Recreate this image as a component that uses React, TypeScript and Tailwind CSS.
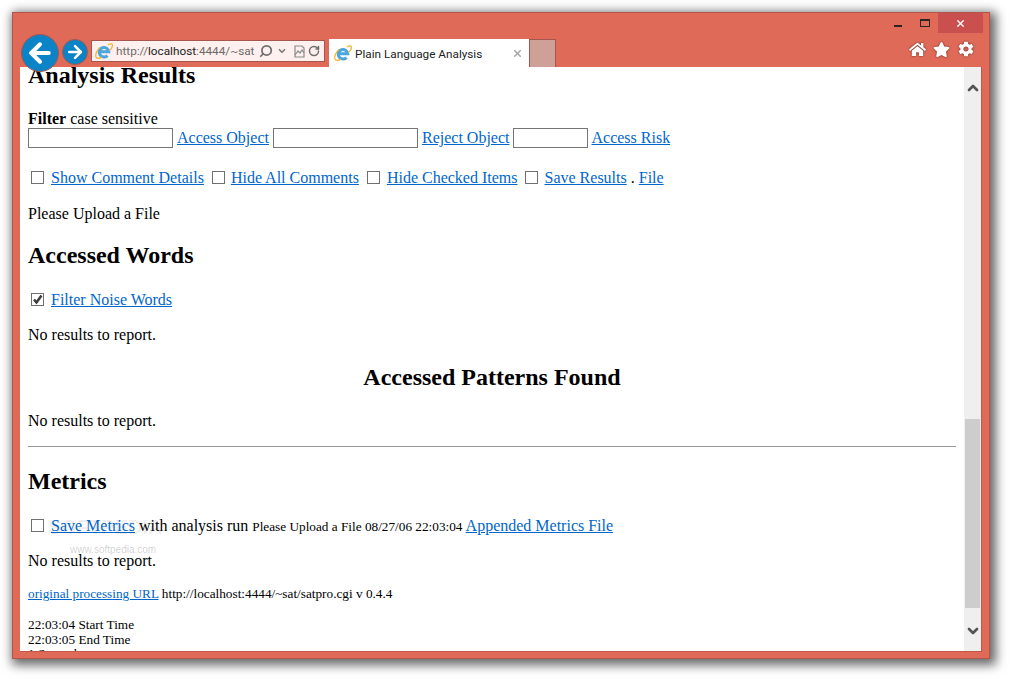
import React from 'react'
import { FaHome, FaStar } from 'react-icons/fa'
import { IoMdSettings } from 'react-icons/io'
import { ArrowLeft, ArrowRight, ChevronDown, ChevronUp, RotateCw, Search, X } from 'lucide-react'

const IeLogo = ({ size = 18 }: { size?: number }) => (
  <svg width={size} height={size} viewBox="0 0 18 18" className="shrink-0">
    <path d="M4.600 9.800h9.200a4.800 4.800 0 1 0-1.300 3.800" fill="none" stroke="#4aa6de" strokeWidth="3" />
    <path d="M12.800 3c2.500-1.600 4.600-1.500 4.700.3.100 1.400-1.300 3.600-3 5.300" fill="none" stroke="#f2b632" strokeWidth="1.300" />
    <path d="M4.800 5.400C1.500 9.300.200 13.400 1.200 15.400c.900 1.600 3.300 1.300 5.600-.3" fill="none" stroke="#f2b632" strokeWidth="1.300" />
  </svg>
)

const Check = ({ checked, cls = '' }: { checked?: boolean; cls?: string }) => (
  <span className={`relative inline-block h-[13px] w-[13px] border border-[#707070] bg-white align-[-1px] ${cls}`}>
    {checked && (
      <svg viewBox="0 0 13 13" className="absolute top-[-1px] left-[-1px] h-[13px] w-[13px]">
        <path d="M3 6.500l2.500 3L10.500 2.500" fill="none" stroke="#3c3c3c" strokeWidth="2.500" />
      </svg>
    )}
  </span>
)

const A = ({ children, cls = '' }: { children: React.ReactNode; cls?: string }) => (
  <a href="#" className={`text-[#0066cc] underline ${cls}`}>{children}</a>
)

const Input = ({ w }: { w: string }) => (
  <span className={`inline-block h-[20px] border border-[#767676] bg-white align-[-5px] ${w}`} />
)

const H2 = ({ children, cls }: { children: React.ReactNode; cls: string }) => (
  <h2 className={`text-[24px] leading-[27px] font-bold ${cls}`}>{children}</h2>
)

const Para = ({ children, cls = '' }: { children: React.ReactNode; cls?: string }) => (
  <p className={`h-[18px] leading-[18px] ${cls}`}>{children}</p>
)

const CheckRow = ({ children, cls }: { children: React.ReactNode; cls: string }) => (
  <div className={`h-[21px] pl-[3px] leading-[21px] whitespace-nowrap ${cls}`}>{children}</div>
)

export default function App() {
  return (
    <div className="h-[679px] w-[1010px] overflow-hidden bg-white pt-3 pl-3 font-['Liberation_Serif',serif] text-black">
      <div className="flex h-[647px] w-[978px] flex-col border border-[#b0564a] bg-[#df6a58] shadow-[3px_3px_10px_3px_rgba(0,0,0,0.6)]">
        {/* window controls */}
        <div className="flex h-[20px] justify-end pr-[6px]">
          <div className="mt-[12px] mr-[18px] h-[2px] w-[8px] bg-[#2a2422]" />
          <div className="mt-[6px] mr-[8px] h-[8px] w-[10px] border border-t-2 border-[#2a2422]" />
          <div className="flex h-[20px] w-[45px] items-center justify-center bg-[#c9504f]">
            <X size={11} strokeWidth={3} className="text-white" />
          </div>
        </div>

        {/* toolbar */}
        <div className="flex h-[34px] items-end pr-[14px] pl-[8px]">
          <div className="z-10 mb-[-5px] flex h-[38px] w-[38px] items-center justify-center rounded-full border border-[#a5574e] bg-[#0a84c6]">
            <ArrowLeft size={30} strokeWidth={3.200} className="text-white" />
          </div>
          <div className="mb-[2px] ml-[3px] flex h-[26px] w-[26px] items-center justify-center rounded-full border border-[#a5574e] bg-[#0a84c6]">
            <ArrowRight size={20} strokeWidth={3} className="text-white" />
          </div>
          <div className="mb-[5px] ml-[3px] flex h-[22px] w-[234px] items-center border border-[#a5574e] bg-[#fdf0ee] pl-[3px] font-['Roboto',sans-serif] text-[11.750px] text-[#6f6a69]">
            <IeLogo />
            <span className="mt-[1px] ml-[3px] w-[143px] whitespace-nowrap">http://<span className="text-[#1c1c1c]">localhost</span>:4444/~sat</span>
            <Search size={14} strokeWidth={3} className="-scale-x-100 text-[#6f6f6f]" />
            <ChevronDown size={10} strokeWidth={4} className="ml-[4px] text-[#7a7a7a]" />
            <svg width="11" height="13" viewBox="0 0 11 13" className="ml-[7px]">
              <path d="M1 1h7l2 2v9H1z" fill="none" stroke="#8a8a8a" strokeWidth="1.200" />
              <path d="M1 10l3-4 2 2 2-3 2 3" fill="none" stroke="#8a8a8a" strokeWidth="1.200" />
            </svg>
            <RotateCw size={12} strokeWidth={3} className="ml-[3px] text-[#6f6f6f]" />
          </div>
          <div className="ml-[4px] flex h-[28px] w-[200px] items-center bg-white pr-[6px] pl-[5px] font-['Roboto',sans-serif] text-[11.750px] text-[#222]">
            <IeLogo />
            <span className="mt-[3px] ml-[3px] flex-1">Plain Language Analysis</span>
            <X size={11} strokeWidth={3.500} className="mt-[1px] text-[#a8a8a8]" />
          </div>
          <div className="h-[28px] w-[27px] border border-b-0 border-[#a5574e] bg-[#cfa097]" />
          <div className="flex-1" />
          <div className="mb-[9px] flex items-center gap-[7px] text-white drop-shadow-[0_0_1px_#6a2c24]">
            <FaHome size={17} />
            <FaStar size={17} />
            <IoMdSettings size={18} />
          </div>
        </div>

        {/* page viewport */}
        <div className="mx-[7px] flex h-[585px] overflow-hidden border-r border-b border-[#c4574a] bg-white">
          <div className="relative h-full w-[945px] overflow-hidden px-[8px] text-[16px]">
            <H2 cls="mt-[-5px] mb-[21px]">Analysis Results</H2>
            <div className="h-[18px] leading-[18px]"><b>Filter</b> case sensitive</div>
            <div className="h-[20px] leading-[20px] whitespace-nowrap">
              <Input w="w-[145px]" />
              <A cls="ml-[4px]">Access Object</A>
              <Input w="ml-[4px] w-[145px]" />
              <A cls="ml-[4px]">Reject Object</A>
              <Input w="ml-[4px] w-[75px]" />
              <A cls="ml-[3px]">Access Risk</A>
            </div>
            <CheckRow cls="mt-[19px]">
              <Check />
              <A cls="ml-[7px]">Show Comment Details</A>
              <Check cls="ml-[8px]" />
              <A cls="ml-[6px]">Hide All Comments</A>
              <Check cls="ml-[8px]" />
              <A cls="ml-[7px]">Hide Checked Items</A>
              <Check cls="ml-[7px]" />
              <A cls="ml-[7px]">Save Results</A>
              <span className="ml-[4px]">.</span>
              <A cls="ml-[4px]">File</A>
            </CheckRow>
            <Para cls="mt-[17px]">Please Upload a File</Para>
            <H2 cls="mt-[19px] mb-[20px]">Accessed Words</H2>
            <CheckRow cls=""><Check checked /><A cls="ml-[7px]">Filter Noise Words</A></CheckRow>
            <Para cls="mt-[16px]">No results to report.</Para>
            <H2 cls="mt-[20px] mb-[21px] text-center">Accessed Patterns Found</H2>
            <Para>No results to report.</Para>
            <hr className="mt-[16px] border-t border-[#9a9a9a]" />
            <H2 cls="mt-[21px] mb-[20px]">Metrics</H2>
            <CheckRow cls="">
              <Check /><A cls="ml-[7px]">Save Metrics</A> with analysis run <span className="text-[13.250px]">Please Upload a File 08/27/06 22:03:04</span> <A>Appended Metrics File</A>
            </CheckRow>
            <Para cls="mt-[16px]">No results to report.</Para>
            <div className="mt-[16px] text-[13.250px] leading-[16px]">
              <A>original processing URL</A> http://localhost:4444/~sat/satpro.cgi v 0.4.4
            </div>
            <div className="mt-[16px] text-[13.250px] leading-[14.500px]">
              <div>22:03:04 Start Time</div>
              <div>22:03:05 End Time</div>
              <div>1 Second</div>
            </div>
            {/* watermark over the page */}
            <div className="absolute top-[450px] left-[28px] font-['Liberation_Sans',sans-serif] text-[20px] leading-[20px] font-bold text-black/[0.08]">SOFTPEDIA</div>
            <div className="absolute top-[477px] left-[50px] font-['Liberation_Sans',sans-serif] text-[10px] leading-[12px] text-black/20">www.softpedia.com</div>
          </div>

          {/* scrollbar */}
          <div className="flex w-[17px] flex-col bg-[#efefef]">
            <div className="flex h-[42px] items-center justify-center">
              <ChevronUp size={16} strokeWidth={4} className="text-[#555]" />
            </div>
            <div className="h-[310px]" />
            <div className="mx-[1px] h-[189px] bg-[#cdcdcd]" />
            <div className="flex flex-1 items-center justify-center pt-[2px]">
              <ChevronDown size={16} strokeWidth={4} className="text-[#555]" />
            </div>
          </div>
        </div>
      </div>
    </div>
  )
}
